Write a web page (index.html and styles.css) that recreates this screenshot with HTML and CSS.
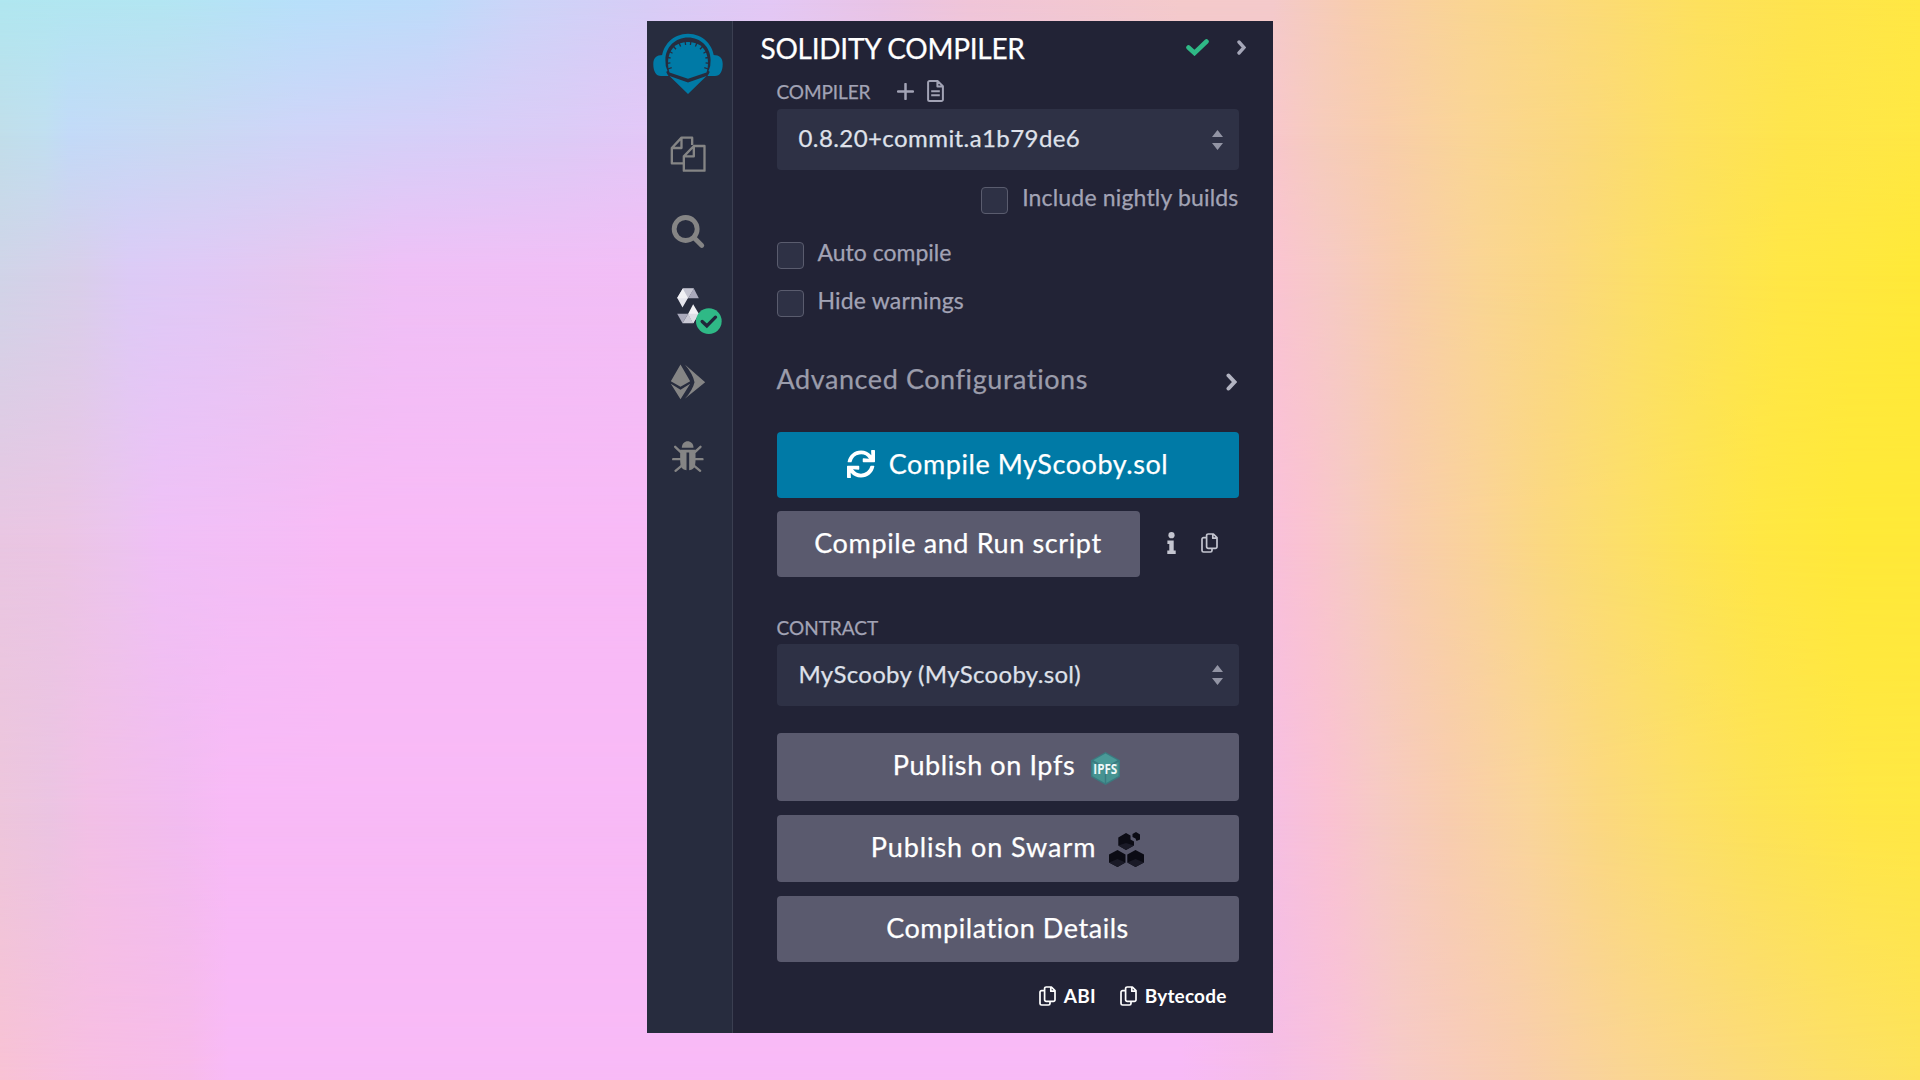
FILE: index.html
```html
<!DOCTYPE html>
<html lang="en">
<head>
<meta charset="utf-8">
<title>Solidity Compiler</title>
<link rel="stylesheet" href="styles.css">
</head>
<body>
<div class="backdrop">
  <div class="wash wash-1"></div>
  <div class="wash wash-2"></div>
  <div class="wash wash-3"></div>
  <div class="wash wash-4"></div>
  <div class="wash wash-5"></div>
  <div class="wash wash-6"></div>
</div>

<svg class="defs" width="0" height="0" aria-hidden="true">
  <symbol id="copy" viewBox="0 0 17 20">
    <path d="M5 4.6H2.6A1.6 1.6 0 0 0 1 6.2V17.400a1.600 1.600 0 0 0 1.600 1.600H9.400A1.600 1.600 0 0 0 11 17.400V15.400" fill="none" stroke="currentColor" stroke-width="1.700"/>
    <path d="M7.200 1H12.400L16 4.600V13.800A1.600 1.600 0 0 1 14.400 15.400H7.200A1.600 1.600 0 0 1 5.600 13.800V2.600A1.600 1.600 0 0 1 7.200 1ZM11.800 1V5.200H16" fill="none" stroke="currentColor" stroke-width="1.700" stroke-linejoin="round"/>
  </symbol>
  <symbol id="sort" viewBox="0 0 11 20">
    <path d="M5.500 0L11 7H0ZM5.500 20L0 13H11Z" fill="currentColor"/>
  </symbol>
</svg>

<div class="panel">
  <nav class="rail">
    <svg class="logo" viewBox="0 0 72 64">
      <g fill="#007aa6">
        <path d="M12.500 41A26.200 26.200 0 0 1 9.800 28C9.800 13 21.500 1.700 36 1.700S62.200 13 62.200 28A26.200 26.200 0 0 1 59.500 41L56.500 39A22.300 22.300 0 0 0 58.600 28C58.600 15 48.500 5.600 36 5.600S13.400 15 13.400 28A22.300 22.300 0 0 0 15.500 39Z"/>
        <path d="M12 23C5 22.500 1.300 25.500 1.300 32C1.300 39.500 4 44 9 44H16.500C12.500 38 11 30 12 23ZM60 23C67 22.500 70.700 25.500 70.700 32C70.700 39.500 68 44 63 44H55.500C59.500 38 61 30 60 23Z"/>
        <path d="M17.500 40.500L36 46.700L54.500 40.500C58 30 56.500 10 36 10S14 30 17.500 40.500Z"/>
        <path d="M17.500 44L36 50.500L54.500 44L36 62Z"/>
      </g>
      <path d="M33 8.500L33.600 13M39 8.500L38.400 13M26.900 10.500L28.600 14.400M45.100 10.500L43.400 14.400M21.300 14.200L24 17.200M50.700 14.200L48 17.200M17.200 19.300L20.500 21.200M54.800 19.300L51.500 21.200M14.900 25.300L18.600 26M57.100 25.300L53.400 26M14.700 31.400L18.400 30.900M57.300 31.400L53.600 30.900M15.800 37L19.700 35.600M56.200 37L52.300 35.600" stroke="#272c3e" stroke-width="1.300"/>
    </svg>
    <svg class="tool" viewBox="88.500 370 120 120">
      <g fill="none" stroke="#858585" stroke-width="7" stroke-linejoin="round">
        <path d="M132 458H97V412L126 381H158V403M126 381V412H97"/>
        <path d="M133 480V437L163 406H195V480ZM163 406V437H133"/>
      </g>
    </svg>
    <svg class="tool" viewBox="88.500 58.500 120 120">
      <circle cx="138.500" cy="115.500" r="34.500" fill="none" stroke="#858585" stroke-width="14.500"/>
      <path d="M163 141L187 165" stroke="#858585" stroke-width="14" stroke-linecap="round"/>
    </svg>
    <svg class="tool" viewBox="88.500 286.500 120 120">
      <path d="M130 294H163L145 323L129 351L113 322Z" fill="#e4e4ec"/>
      <path d="M130 294L146 323H113Z" fill="#f1f1f5"/>
      <path d="M130 294H163L146 323Z" fill="#c5c5d2"/>
      <path d="M163 294L178 323H146Z" fill="#a9a9bb"/>
      <path d="M113 370H146L129 398Z" fill="#a9a9bb"/>
      <path d="M146 370L161 398H129Z" fill="#c9c9d5"/>
      <path d="M161 341L178 370L161 398L146 370Z" fill="#f1f1f5"/>
      <path d="M146 370H178L161 398Z" fill="#dedee6"/>
      <circle cx="208" cy="392" r="38.500" fill="#2fb986"/>
      <path d="M188 393L202 406L228 380" fill="none" stroke="#20263a" stroke-width="10" stroke-linecap="round"/>
    </svg>
    <svg class="tool" viewBox="88.500 514.500 120 120">
      <path d="M123 522L152 572L123 589L94 572ZM94 580L123 598L152 580L123 626ZM136 522L197 575L136 625Q160 598 165 575Q160 550 136 522Z" fill="#858585"/>
    </svg>
    <svg class="tool" viewBox="88.500 742.500 120 120">
      <path d="M127 772C127 746 162 746 162 772Z" fill="#858585"/>
      <path d="M122 778H168V812Q168 838 149 839V786H141V839Q122 838 122 812Z" fill="#858585"/>
      <path d="M107 769L123 784M183 769L167 784M101 806H122M189 806H168M108 841L126 826M182 841L164 826" stroke="#858585" stroke-width="7" stroke-linecap="round"/>
    </svg>
  </nav>

  <main class="content">
    <header class="head">
      <h1 class="title">SOLIDITY COMPILER</h1>
      <svg class="ok" viewBox="0 0 23 17"><path d="M2.500 8.500L8.500 14L20.500 2.500" fill="none" stroke="#2fb986" stroke-width="4.600" stroke-linecap="round"/></svg>
      <svg class="collapse" viewBox="0 0 9 15"><path d="M2 2L7 7.500L2 13" fill="none" stroke="#a5a6b8" stroke-width="3.400" stroke-linecap="round"/></svg>
    </header>

    <div class="label-row">
      <span class="label compiler">COMPILER</span>
      <svg class="plus" viewBox="0 0 17 17"><path d="M8.500 1V16M1 8.500H16" stroke="currentColor" stroke-width="2.500" stroke-linecap="round"/></svg>
      <svg class="doc" viewBox="0 0 17 22"><path d="M2.600 1.100H10.800L15.900 6.200V19.400A1.500 1.500 0 0 1 14.400 20.900H2.600A1.500 1.500 0 0 1 1.100 19.400V2.600A1.500 1.500 0 0 1 2.600 1.100ZM10.400 1.100V6.600H15.900" fill="none" stroke="currentColor" stroke-width="2" stroke-linejoin="round"/><path d="M4.200 11.300H12.800M4.200 15.300H12.800" stroke="currentColor" stroke-width="2"/></svg>
    </div>
    <div class="select"><span class="version">0.8.20+commit.a1b79de6</span><svg class="sort"><use href="#sort"/></svg></div>

    <div class="option nightly"><span class="box"></span><span class="option-text">Include nightly builds</span></div>
    <div class="option auto"><span class="box"></span><span class="option-text tight">Auto compile</span></div>
    <div class="option hide"><span class="box"></span><span class="option-text">Hide warnings</span></div>

    <div class="advanced">
      <span class="advanced-text">Advanced Configurations</span>
      <svg class="expand" viewBox="0 0 11 18"><path d="M2.500 2.500L8.500 9L2.500 15.500" fill="none" stroke="#b3b4c2" stroke-width="4" stroke-linecap="round"/></svg>
    </div>

    <button class="btn compile">
      <svg class="sync" viewBox="0 0 512 512"><path fill="#fff" d="M440.650 12.570l4 82.770A247.160 247.160 0 0 0 255.830 8C134.730 8 33.910 94.920 12.290 209.820A12 12 0 0 0 24.090 224h49.050a12 12 0 0 0 11.670-9.260 175.910 175.910 0 0 1 317-56.940l-101.460-4.860a12 12 0 0 0-12.570 12v47.410a12 12 0 0 0 12 12H500a12 12 0 0 0 12-12V12a12 12 0 0 0-12-12h-47.370a12 12 0 0 0-11.980 12.570zM255.830 432a175.610 175.610 0 0 1-146-77.800l101.800 4.870a12 12 0 0 0 12.570-12v-47.400a12 12 0 0 0-12-12H12a12 12 0 0 0-12 12V500a12 12 0 0 0 12 12h47.350a12 12 0 0 0 12-12.600l-4.150-82.570A247.170 247.170 0 0 0 255.830 504c121.110 0 221.930-86.920 243.550-201.820a12 12 0 0 0-11.800-14.180h-49.050a12 12 0 0 0-11.670 9.260A175.860 175.860 0 0 1 255.830 432z"/></svg>
      <span>Compile MyScooby.sol</span>
    </button>

    <div class="run-row">
      <button class="btn run"><span>Compile and Run script</span></button>
      <svg class="info" viewBox="0 0 9 22"><circle cx="4.500" cy="3.200" r="3.100" fill="currentColor"/><path d="M.4 8.500H6.700V18.600H8.700V22H.3V18.600H2.300V11.900H.4Z" fill="currentColor"/></svg>
      <svg class="copy"><use href="#copy"/></svg>
    </div>

    <div class="contract-label label">CONTRACT</div>
    <div class="select contract"><span class="contract-name">MyScooby (MyScooby.sol)</span><svg class="sort"><use href="#sort"/></svg></div>

    <button class="btn ipfs"><span>Publish on Ipfs</span>
      <svg class="ipfs-logo" viewBox="0 0 29 33">
        <path d="M14.500 0L29 8.200V24.800L14.500 33L0 24.800V8.200Z" fill="#3a7b80"/>
        <path d="M14.500 1.500L26.500 8.300L14.500 15L2.500 8.300Z" fill="#4a9a98"/>
        <path d="M1.500 10L13.800 17V31L1.500 24ZM27.500 10L15.200 17V31L27.500 24Z" fill="#469391"/>
        <text class="ipfs-text" x="14.300" y="21.600" text-anchor="middle" textLength="24" lengthAdjust="spacingAndGlyphs">IPFS</text>
      </svg>
    </button>
    <button class="btn swarm"><span>Publish on Swarm</span>
      <svg class="swarm-logo" viewBox="0 0 35 35">
        <path d="M8.500 18L0 22.500V30.500L8.500 35L16.500 30.500V22.500ZM26.500 18L18.300 22.500V30.500L26.500 35L35 30.500V22.500ZM17 1L9.300 5.500V13.500L17 18L25 13.500V9.500L21.500 7.500V3.500ZM27 0L23.500 2V5L26.500 6.500L27.500 9L31 7.500V2.500Z" fill="#0b0b14"/>
        <path d="M8.500 27L16.500 30.500L8.500 35L0 30.500ZM26.500 27L35 30.500L26.500 35L18.300 30.500ZM17 11L25 13.500L17 18L9.300 13.500Z" fill="#1a1a27"/>
      </svg>
    </button>
    <button class="btn details"><span>Compilation Details</span></button>

    <footer class="foot">
      <svg class="copy"><use href="#copy"/></svg><span class="abi">ABI</span>
      <svg class="copy"><use href="#copy"/></svg><span>Bytecode</span>
    </footer>
  </main>
</div>
</body>
</html>
```
FILE: styles.css
```css
* { box-sizing: border-box; }
html, body { margin: 0; height: 100%; }
body {
  width: 1920px;
  height: 1080px;
  overflow: hidden;
  display: flex;
  padding: 21px 0 0 647px;
  font-family: Lato, "Open Sans", sans-serif;
  -webkit-text-stroke: .25px currentColor;
  position: relative;
}
svg { display: block; flex: none; }
.defs { position: absolute; }

/* Horizontal colour bands, each faded into the one above it */
.backdrop { position: absolute; inset: 0; z-index: -1; }
.wash { position: absolute; inset: 0; }
.wash-1 { background: linear-gradient(90deg, #b0e7f0 0, #b3e6f2 160px, #b8e0fa 300px, #bddcfa 430px, #ccd5f8 520px, #d7cdf6 647px, #e3c8f5 770px, #e9c4e6 880px, #f0c5d8 970px, #f4cacb 1180px, #f4cacb 1273px, #f8cdae 1355px, #fad592 1470px, #fcdb76 1600px, #fde15e 1700px, #fee44e 1800px, #ffe843 1920px); }
.wash-2 {
  background: linear-gradient(90deg, #c1deea 0, #c1dff0 45px, #c3daf8 70px, #c9d9f2 180px, #d0d4f8 300px, #d6cff8 430px, #dccbf6 560px, #e3c7f7 647px, #f8c7cc 1273px, #f6ccbc 1320px, #f8cdac 1380px, #fad596 1470px, #fbd97a 1590px, #fde062 1680px, #fee54c 1790px, #ffe843 1920px);
  mask-image: linear-gradient(transparent 0, #000 135px);
}
.wash-3 {
  background: linear-gradient(90deg, #d0d4e8 0, #d8cfea 80px, #dccbf6 130px, #e0c9f6 200px, #e6c7f0 300px, #efc0f6 400px, #f2bef6 647px, #fac4d2 1273px, #f6cac4 1330px, #f8cdac 1400px, #fad594 1480px, #fbd880 1560px, #fcdf68 1640px, #fde356 1710px, #ffe746 1780px, #ffe938 1920px);
  mask-image: linear-gradient(transparent 135px, #000 270px);
}
.wash-4 {
  background: linear-gradient(90deg, #e9c6e2 0, #ebc5e4 60px, #ecc4ee 120px, #f0c0f6 160px, #f4bdf6 270px, #f8baf6 340px, #f8baf6 647px, #f9c0da 1273px, #fac3d0 1310px, #f6cac4 1350px, #f8cdae 1405px, #fad398 1480px, #fbd97e 1550px, #fcdf6a 1620px, #fde358 1680px, #ffe744 1760px, #ffe938 1850px);
  mask-image: linear-gradient(transparent 270px, #000 540px);
}
.wash-5 {
  background: linear-gradient(90deg, #edc6dc 0, #ebc4e2 50px, #f2c0e6 90px, #f2bcf0 180px, #f8baf6 230px, #f8baf6 1180px, #f6bfe2 1273px, #fac2d2 1330px, #f6cac4 1380px, #f8cdae 1450px, #fad59a 1530px, #fbd880 1600px, #fcdf6a 1680px, #fde356 1760px, #ffe746 1860px, #ffe843 1920px);
  mask-image: linear-gradient(transparent 540px, #000 810px);
}
.wash-6 {
  background: linear-gradient(90deg, #f8c2d4 0, #f7bee2 90px, #f7bbea 190px, #f8baf6 230px, #f8baf6 1180px, #f5bde6 1273px, #f8c2da 1340px, #f6cac8 1400px, #f8cdae 1520px, #fad592 1630px, #fbda7c 1740px, #fcdf6a 1830px, #fde25c 1920px);
  mask-image: linear-gradient(transparent 810px, #000 1080px);
}

.panel { width: 626px; height: 1012px; display: flex; background: #222336; }

.rail {
  width: 86px;
  border-right: 1px solid #3b3f51;
  background: #272c3e;
  display: flex;
  flex-direction: column;
  align-items: center;
  padding: 11px 1px 0 0;
  gap: 36px;
}
.logo { width: 72px; height: 64px; margin: 0 2px 1.5px 0; }
.tool { width: 40px; height: 40px; overflow: visible; }

.content { flex: 1; padding: 0 34.5px 0 43.500px; display: flex; flex-direction: column; }
.head { height: 53px; flex: none; display: flex; align-items: center; margin: 0 -7px 0 -16px; }
.title { margin: 0; font-size: 28px; font-weight: 400; letter-spacing: -.26px; color: #fff; line-height: 34px; }
.ok { width: 23px; height: 17px; margin-left: auto; }
.collapse { width: 9px; height: 15px; margin-left: 28px; }

.label { font-size: 19px; line-height: 24px; color: #a2a3b5; }
.label-row { height: 35px; flex: none; display: flex; align-items: center; color: #a2a3b5; padding-bottom: 1px; }
.compiler { letter-spacing: -.1px; margin-top: 2px; }
.plus { width: 17px; height: 17px; margin-left: 27px; }
.doc { width: 17px; height: 22px; margin-left: 13px; }

.select {
  height: 61px;
  flex: none;
  display: flex;
  align-items: center;
  justify-content: space-between;
  padding: 0 15.5px 3px 22px;
  border-radius: 4px;
  background: #2e3145;
  font-size: 24px;
  color: #dfe1ea;
}
.version { letter-spacing: .42px; margin-top: -1px; }
.contract-name { letter-spacing: .32px; margin-top: -1px; }
.sort { width: 11px; height: 20px; color: #9294a4; margin-top: 3px; }

.option { height: 27px; flex: none; display: flex; gap: 14px; color: #a2a3b5; }
.option-text { font-size: 23px; line-height: 20px; letter-spacing: .17px; white-space: nowrap; }
.tight { letter-spacing: 0; }
.box { width: 27px; height: 27px; flex: none; border: 1px solid #5a5c6e; border-radius: 4px; background: #2e3145; }
.nightly { margin-top: 16.500px; justify-content: flex-end; }
.auto { margin-top: 28.500px; }
.hide { margin-top: 21px; }

.advanced { height: 40px; flex: none; margin-top: 45px; display: flex; align-items: center; justify-content: space-between; padding-right: 2px; }
.advanced-text { font-size: 27px; line-height: 34px; letter-spacing: .58px; color: #9b9cab; margin-top: -6px; }
.expand { width: 11px; height: 18px; }

.btn {
  flex: none;
  display: flex;
  align-items: center;
  justify-content: center;
  width: 100%;
  height: 66px;
  margin: 0;
  padding: 0 0 3px;
  border: 0;
  border-radius: 4px;
  background: #5a5a6e;
  color: #fff;
  font: 400 27px/34px Lato, "Open Sans", sans-serif;
  letter-spacing: .56px;
}
.compile { background: #007aa6; margin-top: 30px; gap: 14px; }
.sync { width: 28px; height: 28px; }
.run-row { height: 66px; flex: none; margin-top: 13px; display: flex; align-items: center; color: #c4c5d0; }
.run { width: 363px; letter-spacing: .62px; }
.info { width: 9px; height: 22px; margin-left: 27px; margin-top: -2px; }
.copy { width: 17px; height: 20px; }
.run-row .copy { margin-left: 25px; margin-top: -2px; }

.contract-label { margin-top: 39px; height: 28px; }
.contract { height: 62px; }
.ipfs { height: 68px; margin-top: 27px; gap: 16px; letter-spacing: .6px; padding: 0 2px 4px 0; }
.ipfs-logo { width: 29px; height: 33px; margin-top: 7px; overflow: visible; }
.ipfs-text { font: 700 13.500px "Open Sans", sans-serif; letter-spacing: 0; fill: #eef8f8; -webkit-text-stroke: 0; }
.swarm { height: 67px; margin-top: 14px; gap: 13px; letter-spacing: .93px; }
.swarm-logo { width: 35px; height: 35px; margin-top: 4px; }
.details { margin-top: 14px; }

.foot { display: flex; align-items: center; justify-content: flex-end; margin-top: 21.500px; height: 24px; padding-right: 12px; gap: 8px; font-size: 19px; font-weight: 700; letter-spacing: .18px; color: #fff; -webkit-text-stroke: 0; }
.abi { margin-right: 16px; }
```
